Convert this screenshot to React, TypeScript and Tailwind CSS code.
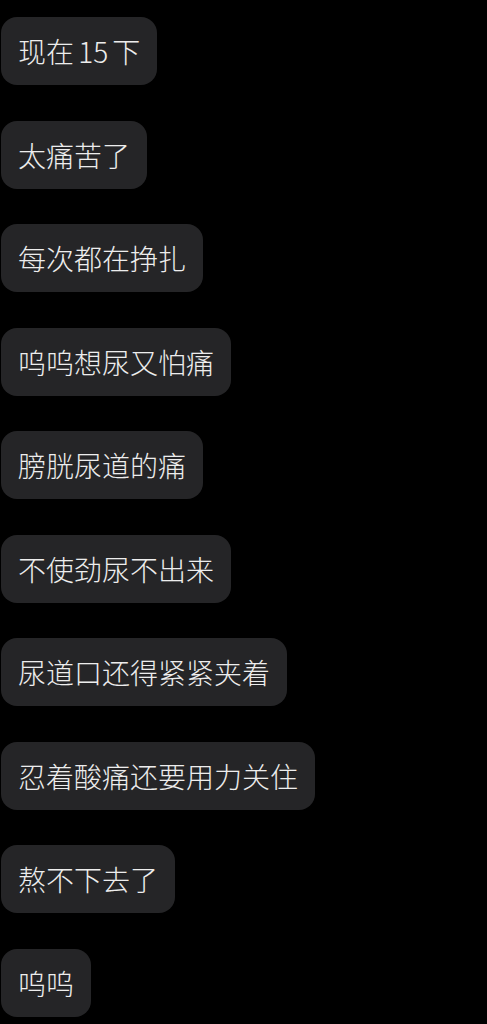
const messages = [
  "现在 15 下",
  "太痛苦了",
  "每次都在挣扎",
  "呜呜想尿又怕痛",
  "膀胱尿道的痛",
  "不使劲尿不出来",
  "尿道口还得紧紧夹着",
  "忍着酸痛还要用力关住",
  "熬不下去了",
  "呜呜",
];

export default function App() {
  return (
    <div
      className="min-h-screen w-full bg-black pt-[17px]"
      style={{ fontFamily: '"Noto Sans CJK SC", "Noto Sans", sans-serif' }}
    >
      <div className="flex flex-col items-start gap-[35.5px] pl-px">
        {messages.map((m) => (
          <div
            key={m}
            className="flex h-[68px] items-center rounded-[16px] bg-[#252527] px-[17px] text-[28px] font-light leading-[34px] text-[#ededed] [word-spacing:-2px]"
          >
            {m}
          </div>
        ))}
      </div>
    </div>
  );
}
